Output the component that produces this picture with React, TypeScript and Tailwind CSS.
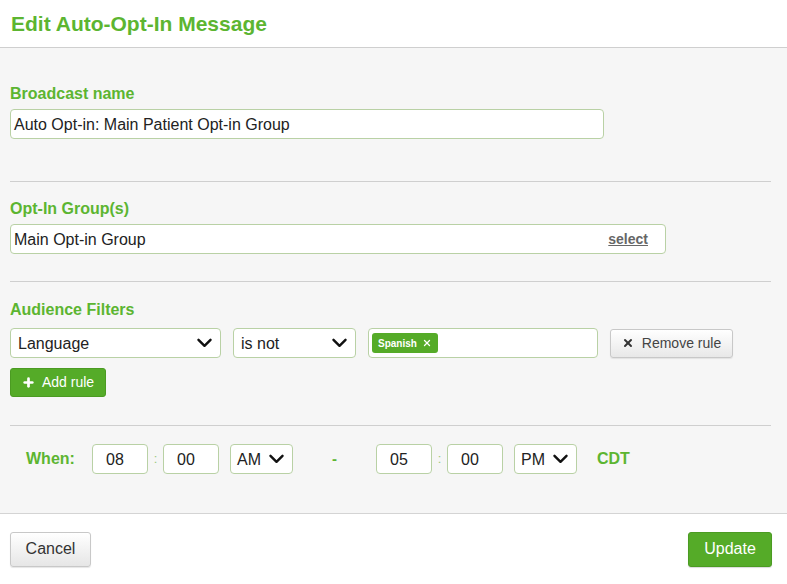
import { Plus, X } from "lucide-react";

const font = { fontFamily: '"Liberation Sans", Arial, sans-serif' };

function Chevron() {
  return (
    <svg width="15" height="10" viewBox="0 0 15 10" className="shrink-0">
      <path d="M1.5 1.8 L7.5 7.8 L13.5 1.8" fill="none" stroke="#111" strokeWidth="2.4" strokeLinecap="round" strokeLinejoin="round" />
    </svg>
  );
}

function FakeSelect({ value, w, pl = "pl-[7px]" }: { value: string; w: string; pl?: string }) {
  return (
    <div className={`${w} h-[30px] bg-white border border-[#b9d1a5] rounded-[4px] flex items-center justify-between ${pl} pr-[8px] text-[16px] text-[#222]`}>
      <span className="pt-[2px]">{value}</span>
      <Chevron />
    </div>
  );
}

function TimeBox({ value }: { value: string }) {
  return (
    <div className="w-[56px] h-[30px] bg-white border border-[#b9d1a5] rounded-[4px] flex items-center pl-[13px] pt-[2px] text-[16px] text-[#222]">
      {value}
    </div>
  );
}

function Colon() {
  return <span className="w-[15px] text-center text-[#9cc97f] text-[13px]">:</span>;
}

export default function App() {
  return (
    <div className="w-[787px] h-[584px] bg-white flex flex-col" style={font}>
      <div className="h-[48px] border-b border-[#cfcfcf] flex items-center px-[11px]">
        <h1 className="text-[21px] font-bold text-[#5cb531]">Edit Auto-Opt-In Message</h1>
      </div>

      <div className="flex-1 bg-[#f6f6f6] pl-[10px] pr-[16px] border-b border-[#d4d4d4]">
        <div className="pt-[37px] pb-[42px] border-b border-[#cfcfcf]">
          <div className="text-[16px] font-bold text-[#5cb531] leading-[17px] mb-[7px]">Broadcast name</div>
          <div className="w-[594px] h-[30px] bg-white border border-[#b9d1a5] rounded-[4px] flex items-center pl-[3px] pt-[1px] text-[16px] text-[#222]">
            Auto Opt-in: Main Patient Opt-in Group
          </div>
        </div>

        <div className="pt-[18px] pb-[27px] border-b border-[#cfcfcf]">
          <div className="text-[16px] font-bold text-[#5cb531] leading-[17px] mb-[7px]">Opt-In Group(s)</div>
          <div className="w-[656px] h-[30px] bg-white border border-[#b9d1a5] rounded-[4px] flex items-center justify-between pl-[3px] pr-[17px] text-[16px] text-[#222]">
            <span className="pt-[1px]">Main Opt-in Group</span>
            <span className="text-[14px] font-bold text-[#666] underline">select</span>
          </div>
        </div>

        <div className="pt-[19px] pb-[28px] border-b border-[#cfcfcf]">
          <div className="text-[16px] font-bold text-[#5cb531] leading-[17px] mb-[10px]">Audience Filters</div>
          <div className="flex items-center">
            <FakeSelect value="Language" w="w-[211px]" />
            <div className="w-[12px]" />
            <FakeSelect value="is not" w="w-[123px]" />
            <div className="w-[12px]" />
            <div className="w-[230px] h-[30px] bg-white border border-[#b9d1a5] rounded-[4px] flex items-center pl-[3px]">
              <span className="h-[20px] rounded-[3px] bg-[#55ab28] text-white text-[10px] font-bold flex items-center gap-[5px] pl-[6px] pr-[6px]">
                Spanish
                <X size={10} strokeWidth={3} />
              </span>
            </div>
            <div className="w-[12px]" />
            <div className="w-[123px] h-[29px] rounded-[3px] border border-[#c8c8c8] bg-gradient-to-b from-white to-[#e8e8e8] flex items-center justify-center gap-[8px] text-[14px] text-[#444] shadow-[0_1px_1px_rgba(0,0,0,0.08)]">
              <X size={12} strokeWidth={4} className="text-[#333]" />
              Remove rule
            </div>
          </div>
          <div className="mt-[10px] w-[96px] h-[29px] rounded-[3px] bg-[#55ab28] border border-[#4b9b22] flex items-center justify-center gap-[7px] text-white text-[14px]">
            <Plus size={13} strokeWidth={5} />
            Add rule
          </div>
        </div>

        <div className="pt-[18px] flex items-center">
          <span className="ml-[16px] w-[66px] text-[16px] font-bold text-[#5cb531]">When:</span>
          <TimeBox value="08" />
          <Colon />
          <TimeBox value="00" />
          <div className="w-[11px]" />
          <FakeSelect value="AM" w="w-[63px]" pl="pl-[6px]" />
          <span className="w-[83px] text-center text-[15px] font-bold text-[#5cb531]">-</span>
          <TimeBox value="05" />
          <Colon />
          <TimeBox value="00" />
          <div className="w-[11px]" />
          <FakeSelect value="PM" w="w-[63px]" pl="pl-[6px]" />
          <span className="ml-[20px] text-[16px] font-bold text-[#5cb531]">CDT</span>
        </div>
      </div>

      <div className="h-[70px] flex items-center justify-between pl-[10px] pr-[15px]">
        <div className="w-[81px] h-[35px] rounded-[3px] border border-[#c8c8c8] bg-gradient-to-b from-white to-[#e6e6e6] flex items-center justify-center text-[16px] text-[#333] shadow-[0_1px_1px_rgba(0,0,0,0.1)]">
          Cancel
        </div>
        <div className="w-[84px] h-[35px] rounded-[3px] bg-[#55ab28] border border-[#4b9b22] flex items-center justify-center text-[16px] text-white shadow-[0_1px_1px_rgba(0,0,0,0.15)]">
          Update
        </div>
      </div>
    </div>
  );
}
